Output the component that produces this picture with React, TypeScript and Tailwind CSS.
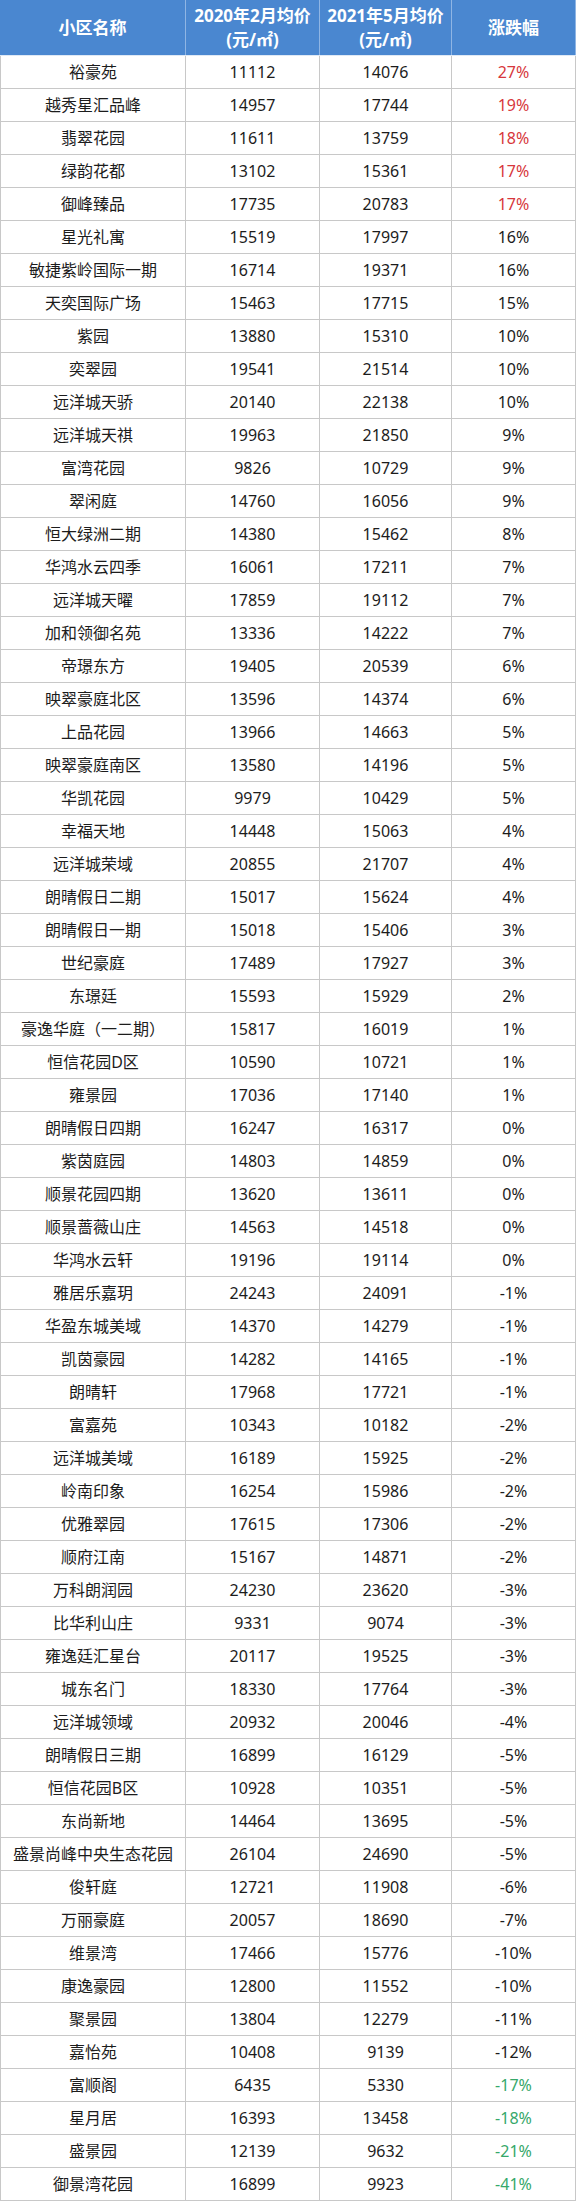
type Row = [string, number, number, number];

const rows: Row[] = [
  ['裕豪苑', 11112, 14076, 27],
  ['越秀星汇品峰', 14957, 17744, 19],
  ['翡翠花园', 11611, 13759, 18],
  ['绿韵花都', 13102, 15361, 17],
  ['御峰臻品', 17735, 20783, 17],
  ['星光礼寓', 15519, 17997, 16],
  ['敏捷紫岭国际一期', 16714, 19371, 16],
  ['天奕国际广场', 15463, 17715, 15],
  ['紫园', 13880, 15310, 10],
  ['奕翠园', 19541, 21514, 10],
  ['远洋城天骄', 20140, 22138, 10],
  ['远洋城天祺', 19963, 21850, 9],
  ['富湾花园', 9826, 10729, 9],
  ['翠闲庭', 14760, 16056, 9],
  ['恒大绿洲二期', 14380, 15462, 8],
  ['华鸿水云四季', 16061, 17211, 7],
  ['远洋城天曜', 17859, 19112, 7],
  ['加和领御名苑', 13336, 14222, 7],
  ['帝璟东方', 19405, 20539, 6],
  ['映翠豪庭北区', 13596, 14374, 6],
  ['上品花园', 13966, 14663, 5],
  ['映翠豪庭南区', 13580, 14196, 5],
  ['华凯花园', 9979, 10429, 5],
  ['幸福天地', 14448, 15063, 4],
  ['远洋城荣域', 20855, 21707, 4],
  ['朗晴假日二期', 15017, 15624, 4],
  ['朗晴假日一期', 15018, 15406, 3],
  ['世纪豪庭', 17489, 17927, 3],
  ['东璟廷', 15593, 15929, 2],
  ['豪逸华庭（一二期）', 15817, 16019, 1],
  ['恒信花园D区', 10590, 10721, 1],
  ['雍景园', 17036, 17140, 1],
  ['朗晴假日四期', 16247, 16317, 0],
  ['紫茵庭园', 14803, 14859, 0],
  ['顺景花园四期', 13620, 13611, 0],
  ['顺景蔷薇山庄', 14563, 14518, 0],
  ['华鸿水云轩', 19196, 19114, 0],
  ['雅居乐嘉玥', 24243, 24091, -1],
  ['华盈东城美域', 14370, 14279, -1],
  ['凯茵豪园', 14282, 14165, -1],
  ['朗晴轩', 17968, 17721, -1],
  ['富嘉苑', 10343, 10182, -2],
  ['远洋城美域', 16189, 15925, -2],
  ['岭南印象', 16254, 15986, -2],
  ['优雅翠园', 17615, 17306, -2],
  ['顺府江南', 15167, 14871, -2],
  ['万科朗润园', 24230, 23620, -3],
  ['比华利山庄', 9331, 9074, -3],
  ['雍逸廷汇星台', 20117, 19525, -3],
  ['城东名门', 18330, 17764, -3],
  ['远洋城领域', 20932, 20046, -4],
  ['朗晴假日三期', 16899, 16129, -5],
  ['恒信花园B区', 10928, 10351, -5],
  ['东尚新地', 14464, 13695, -5],
  ['盛景尚峰中央生态花园', 26104, 24690, -5],
  ['俊轩庭', 12721, 11908, -6],
  ['万丽豪庭', 20057, 18690, -7],
  ['维景湾', 17466, 15776, -10],
  ['康逸豪园', 12800, 11552, -10],
  ['聚景园', 13804, 12279, -11],
  ['嘉怡苑', 10408, 9139, -12],
  ['富顺阁', 6435, 5330, -17],
  ['星月居', 16393, 13458, -18],
  ['盛景园', 12139, 9632, -21],
  ['御景湾花园', 16899, 9923, -41],
];

// top five go red, bottom four go green, the rest stay black
const changeColor = (i: number) => {
  if (i < 5) return 'text-[#d7373c]';
  if (i >= rows.length - 4) return 'text-[#36a86a]';
  return 'text-[#1c1c1c]';
};

const App = () => {
  return (
    <div
      className="w-[576px] bg-white"
      style={{ fontFamily: '"Noto Sans", "Noto Sans CJK SC", sans-serif' }}
    >
      <div className="grid h-[56px] grid-cols-[186px_134px_132px_124px] border-b border-[#dfe9f5] bg-[#4a87d0] text-[17px] font-bold text-white">
        <div className="flex items-center justify-center border-r border-[#8fb5e4]">小区名称</div>
        <div className="flex flex-col items-center justify-center border-r border-[#8fb5e4] leading-[24px]">
          <span>2020年2月均价</span>
          <span>(元/㎡)</span>
        </div>
        <div className="flex flex-col items-center justify-center border-r border-[#8fb5e4] leading-[24px]">
          <span>2021年5月均价</span>
          <span>(元/㎡)</span>
        </div>
        <div className="flex items-center justify-center border-r border-[#8fb5e4]">涨跌幅</div>
      </div>

      {rows.map(([name, before, after, change], i) => (
        <div
          key={name + i}
          className="grid h-[33px] grid-cols-[186px_134px_132px_124px] border-b border-[#c8c8c8] text-[16px] text-[#1c1c1c]"
        >
          <div className="flex items-center justify-center border-r border-l border-[#c8c8c8] whitespace-nowrap">
            {name}
          </div>
          <div className="flex items-center justify-center border-r border-[#c8c8c8]">{before}</div>
          <div className="flex items-center justify-center border-r border-[#c8c8c8]">{after}</div>
          <div className={`flex items-center justify-center border-r border-[#c8c8c8] ${changeColor(i)}`}>
            {change}%
          </div>
        </div>
      ))}
    </div>
  );
};

export default App;
